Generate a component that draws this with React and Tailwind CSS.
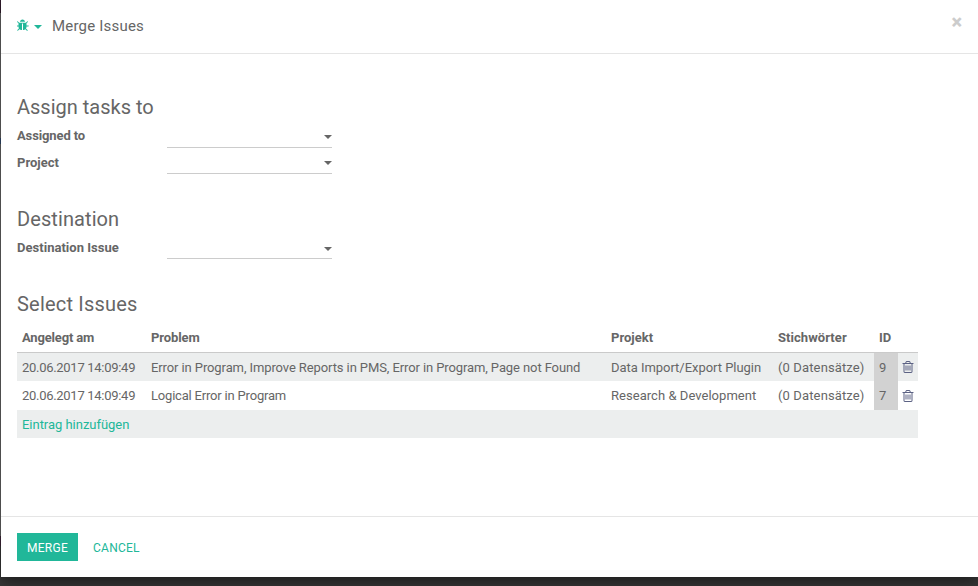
const BUG =
  'M1632 960q0 26-19 45t-45 19h-224q0 171-67 290l208 209q19 19 19 45t-19 45q-18 19-45 19t-45-19l-198-197q-5 5-15 13t-42 28.5-65 36.5-82 29-97 13v-896h-128v896q-51 0-101.5-13.5t-87-33-66-39-43.5-32.5l-15-14-183 207q-20 21-48 21-24 0-43-16-19-18-20.5-44.5t15.5-46.5l202-227q-58-114-58-274h-224q-26 0-45-19t-19-45 19-45 45-19h224v-294l-173-173q-19-19-19-45t19-45 45-19 45 19l173 173h844l173-173q19-19 45-19t45 19 19 45-19 45l-173 173v294h224q26 0 45 19t19 45zm-480-576h-640q0-133 93.5-226.5t226.5-93.5 226.5 93.5 93.5 226.5z';
const TRASH =
  'M704 736v576q0 14-9 23t-23 9h-64q-14 0-23-9t-9-23v-576q0-14 9-23t23-9h64q14 0 23 9t9 23zm256 0v576q0 14-9 23t-23 9h-64q-14 0-23-9t-9-23v-576q0-14 9-23t23-9h64q14 0 23 9t9 23zm256 0v576q0 14-9 23t-23 9h-64q-14 0-23-9t-9-23v-576q0-14 9-23t23-9h64q14 0 23 9t9 23zm128 724v-948h-896v948q0 22 7 40.5t14.5 27 10.5 8.5h832q3 0 10.5-8.5t14.5-27 7-40.5zm-672-1076h448l-48-117q-7-9-17-11h-317q-10 2-17 11zm928 32v64q0 14-9 23t-23 9h-96v948q0 83-47 143.5t-113 60.5h-832q-66 0-113-58.5t-47-141.5v-952h-96q-14 0-23-9t-9-23v-64q0-14 9-23t23-9h309l70-167q15-37 54-63t79-26h320q40 0 79 26t54 63l70 167h309q14 0 23 9t9 23z';

const COLS = 'grid grid-cols-[129px_460px_167px_101px_24px_20px]';

const ISSUES = [
  {
    id: 9,
    created: '20.06.2017 14:09:49',
    problem: 'Error in Program, Improve Reports in PMS, Error in Program, Page not Found',
    problemTracking: 'tracking-[-0.1px]',
    project: 'Data Import/Export Plugin',
    projectTracking: 'tracking-[-0.04px]',
    row: 'h-[28px] bg-[#eceeee]',
    cell: 'pt-px',
  },
  {
    id: 7,
    created: '20.06.2017 14:09:49',
    problem: 'Logical Error in Program',
    problemTracking: 'tracking-[-0.19px]',
    project: 'Research & Development',
    projectTracking: 'tracking-[0.04px]',
    row: 'h-[29px]',
    cell: '',
  },
];

function Caret() {
  return <span className="h-0 w-0 border-x-4 border-t-4 border-x-transparent border-t-current" />;
}

function Field({ label, labelClass, caretClass = '' }) {
  return (
    <div className="flex h-[22px] w-[315px]">
      <label className={`w-[150px] font-bold leading-5 ${labelClass}`}>{label}</label>
      <button
        className={`flex h-[22px] flex-1 items-center justify-end border-b border-[#cccccc] ${caretClass}`}
        aria-label={label}
      >
        <Caret />
      </button>
    </div>
  );
}

function Heading({ children, className = '' }) {
  return <h2 className={`text-[20px] leading-6 ${className}`}>{children}</h2>;
}

export default function App() {
  return (
    <div className="flex h-[586px] w-[978px] overflow-hidden bg-[#383838] font-[Roboto,sans-serif] text-[13px] text-[#666666]">
      <div className="flex w-px flex-col bg-[#666666]">
        <div className="h-[13px] bg-[#301b2b]" />
        <div className="mt-[125px] h-[6px] bg-[#31496b]" />
        <div className="mt-[392px] h-[10px] bg-[#3e2639]" />
        <div className="flex-1 bg-[#383838]" />
      </div>
      <div className="flex h-[577px] w-[977px] flex-col bg-white shadow-[0_5px_15px_rgba(0,0,0,0.5)]">
        <header className="flex h-[54px] border-b border-[#e5e5e5] pl-4 pr-4">
          <div className="mt-[18px] flex h-[14px] items-start text-[#21b799]">
            <svg className="mr-px mt-px h-[12px] w-[12px]" viewBox="128 0 1536 1664" preserveAspectRatio="none" fill="currentColor">
              <path d={BUG} />
            </svg>
            <span className="ml-1 mt-[7px] flex">
              <Caret />
            </span>
          </div>
          <h1 className="ml-[10px] mt-4 text-[15px] leading-5 tracking-[0.2px]">Merge Issues</h1>
          <button className="ml-auto mt-3 h-[21px] text-[20px] font-black leading-[21px] text-[#cccccc]">×</button>
        </header>

        <main className="flex-1 px-4 pt-[41px]">
          <section>
            <Heading>Assign tasks to</Heading>
            <div className="mt-[7px] flex flex-col gap-1">
              <Field label="Assigned to" labelClass="tracking-[-0.12px]" />
              <Field label="Project" labelClass="pt-px" />
            </div>
          </section>
          <section className="mt-[33px]">
            <Heading className="tracking-[0.09px]">Destination</Heading>
            <div className="mt-[6px]">
              <Field label="Destination Issue" labelClass="pt-px tracking-[0.03px]" caretClass="pt-[2px]" />
            </div>
          </section>
          <section className="mt-[33px]">
            <Heading className="tracking-[0.2px]">Select Issues</Heading>
            <div className="mt-[7px] w-[901px]">
              <div className={`${COLS} h-[30px] items-center border-b border-[#cacaca] font-bold`}>
                <span className="pl-[5px] tracking-[-0.18px]">Angelegt am</span>
                <span className="pl-[5px] tracking-[-0.1px]">Problem</span>
                <span className="pl-[5px]">Projekt</span>
                <span className="pl-[5px] tracking-[0.06px]">Stichwörter</span>
                <span className="pl-[5px]">ID</span>
              </div>
              {ISSUES.map((issue) => (
                <div key={issue.id} className={`${COLS} ${issue.row} items-center whitespace-nowrap`}>
                  <span className={`pl-[5px] tracking-[-0.29px] ${issue.cell}`}>{issue.created}</span>
                  <span className={`pl-[5px] ${issue.problemTracking} ${issue.cell}`}>{issue.problem}</span>
                  <span className={`pl-[5px] ${issue.projectTracking} ${issue.cell}`}>{issue.project}</span>
                  <span className={`pl-[5px] tracking-[0.13px] ${issue.cell}`}>(0 Datensätze)</span>
                  <span className={`flex h-full items-center bg-[#d2d2d2] pl-[5px] ${issue.cell}`}>{issue.id}</span>
                  <svg className="ml-[3px] h-[14px] w-[14px] text-[#5c6284]" viewBox="0 0 1792 1792" fill="currentColor">
                    <path d={TRASH} />
                  </svg>
                </div>
              ))}
              <div className="flex h-[28px] items-center bg-[#eceeee] pl-[5px] pt-px tracking-[-0.03px] text-[#21b799]">
                Eintrag hinzufügen
              </div>
            </div>
          </section>
        </main>

        <footer className="flex h-[61px] items-start border-t border-[#e5e5e5] px-4 pt-4 text-[12px]">
          <button className="h-[28px] w-[61px] bg-[#21b799] pt-[2px] tracking-[0.3px] text-white">MERGE</button>
          <button className="ml-[15px] h-[28px] pt-[2px] tracking-[0.25px] text-[#21b799]">CANCEL</button>
        </footer>
      </div>
    </div>
  );
}
